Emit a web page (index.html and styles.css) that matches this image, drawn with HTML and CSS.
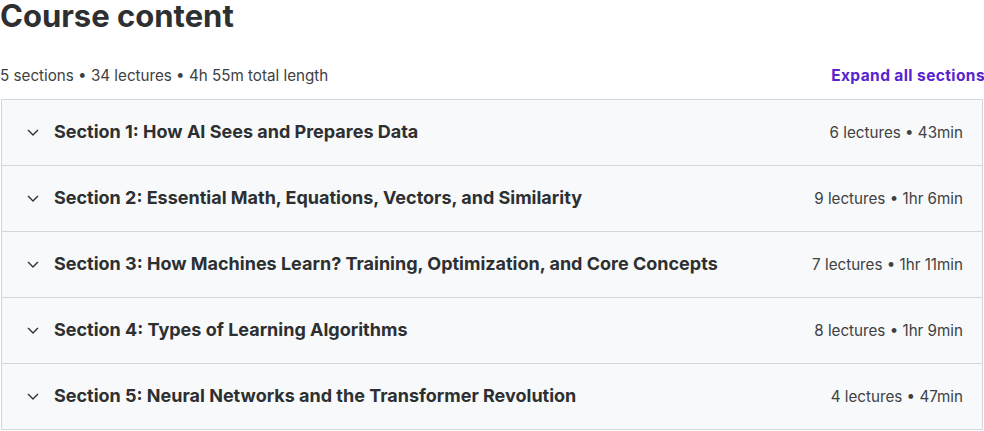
FILE: index.html
```html
<!DOCTYPE html>
<html lang="en">
  <head>
    <meta charset="UTF-8" />
    <meta name="viewport" content="width=device-width, initial-scale=1.0" />
    <title>Course content</title>
    <link rel="stylesheet" href="styles.css">
  </head>
  <body>
    <div class="course-content">
      <h2>Course content</h2>

      <div class="content-header">
        <span class="summary">5 sections • 34 lectures • 4h 55m total length</span>
        <button class="expand-btn">Expand all sections</button>
      </div>

      <div class="sections">
        <div class="section-row">
          <svg class="chevron" viewBox="0 0 24 24"><path d="M5 9.5l7 7 7-7" /></svg>
          <span class="section-title">Section 1: How AI Sees and Prepares Data</span>
          <span class="section-meta">6 lectures • 43min</span>
        </div>
        <div class="section-row">
          <svg class="chevron" viewBox="0 0 24 24"><path d="M5 9.5l7 7 7-7" /></svg>
          <span class="section-title">Section 2: Essential Math, Equations, Vectors, and Similarity</span>
          <span class="section-meta">9 lectures • 1hr 6min</span>
        </div>
        <div class="section-row">
          <svg class="chevron" viewBox="0 0 24 24"><path d="M5 9.5l7 7 7-7" /></svg>
          <span class="section-title">Section 3: How Machines Learn? Training, Optimization, and Core Concepts</span>
          <span class="section-meta">7 lectures • 1hr 11min</span>
        </div>
        <div class="section-row">
          <svg class="chevron" viewBox="0 0 24 24"><path d="M5 9.5l7 7 7-7" /></svg>
          <span class="section-title">Section 4: Types of Learning Algorithms</span>
          <span class="section-meta">8 lectures • 1hr 9min</span>
        </div>
        <div class="section-row">
          <svg class="chevron" viewBox="0 0 24 24"><path d="M5 9.5l7 7 7-7" /></svg>
          <span class="section-title">Section 5: Neural Networks and the Transformer Revolution</span>
          <span class="section-meta">4 lectures • 47min</span>
        </div>
      </div>
    </div>
  </body>
</html>
```

FILE: styles.css
```css
body {
  margin: 0;
  font-family: "Inter", "Liberation Sans", sans-serif;
  color: #2d2f31;
  background: #fff;
}

.course-content {
  width: 984px;
}

h2 {
  margin: 0;
  font-size: 31px;
  line-height: 32px;
  font-weight: 700;
}

.content-header {
  display: flex;
  justify-content: space-between;
  align-items: center;
  margin-top: 29px;
  height: 28px;
  margin-bottom: 10px;
}

.summary {
  font-size: 15.2px;
  color: #3e4143;
}

.expand-btn {
  background: none;
  border: none;
  padding: 0;
  font-family: inherit;
  font-size: 15.5px;
  letter-spacing: 0.4px;
  font-weight: 700;
  color: #5624d0;
  cursor: pointer;
  margin-top: 1px;
  margin-right: -1px;
}

.sections {
  border: 1px solid #d1d7dc;
  margin-left: 1px;
  margin-right: 1px;
}

.section-row {
  display: flex;
  align-items: center;
  height: 65px;
  padding: 0 19px 0 23px;
  background: #f7f9fa;
  border-bottom: 1px solid #d1d7dc;
}

.section-row:last-child {
  border-bottom: none;
}

.chevron {
  width: 16px;
  height: 16px;
  fill: none;
  stroke: #2d2f31;
  stroke-width: 2;
  stroke-linecap: round;
  stroke-linejoin: round;
  margin-right: 13px;
  margin-top: -2px;
  flex-shrink: 0;
}

.section-title {
  flex: 1;
  font-size: 18px;
  font-weight: 700;
  margin-top: -2px;
}

.section-meta {
  font-size: 15.2px;
  color: #3e4143;
}
```
